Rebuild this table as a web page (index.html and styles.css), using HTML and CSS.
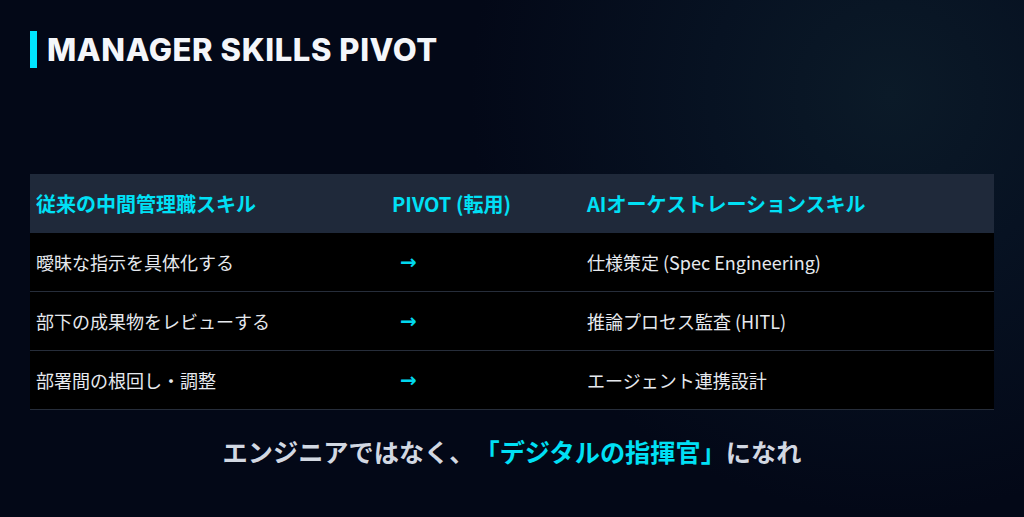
FILE: index.html
```html
<!DOCTYPE html>
<html lang="ja">
<head>
<meta charset="utf-8">
<link rel="stylesheet" href="styles.css">
</head>
<body>
<div class="slide">
  <h1 class="title">MANAGER SKILLS PIVOT</h1>
  <div class="table">
    <div class="row head">
      <div class="cell">従来の中間管理職スキル</div>
      <div class="cell">PIVOT (転用)</div>
      <div class="cell">AIオーケストレーションスキル</div>
    </div>
    <div class="row">
      <div class="cell">曖昧な指示を具体化する</div>
      <div class="cell arrow">→</div>
      <div class="cell">仕様策定 (Spec Engineering)</div>
    </div>
    <div class="row">
      <div class="cell">部下の成果物をレビューする</div>
      <div class="cell arrow">→</div>
      <div class="cell">推論プロセス監査 (HITL)</div>
    </div>
    <div class="row">
      <div class="cell">部署間の根回し・調整</div>
      <div class="cell arrow">→</div>
      <div class="cell">エージェント連携設計</div>
    </div>
  </div>
  <p class="tagline">エンジニアではなく、<span class="hl">「デジタルの指揮官」</span>になれ</p>
</div>
</body>
</html>
```
FILE: styles.css
```css
* { box-sizing: border-box; margin: 0; padding: 0; }
html, body { width: 1024px; height: 517px; overflow: hidden; }
body {
  background: #030817;
  font-family: "Noto Sans CJK JP", "Noto Sans", sans-serif;
  color: #e8ecf2;
  text-spacing-trim: space-all;
}
.slide {
  width: 1024px;
  height: 517px;
  padding: 31px 30px 0 30px;
  background: radial-gradient(circle at 890px 95px, #0b1a28 0px, #071222 180px, #030817 420px);
  display: flex;
  flex-direction: column;
}
.title {
  font-family: "Inter", "Lato", sans-serif;
  font-weight: 800;
  font-size: 31px;
  color: #f4f6fa;
  line-height: 37px;
  border-left: 7px solid #00e5ff;
  padding-left: 10px;
  letter-spacing: 0.6px;
}
.table {
  margin-top: 106px;
  width: 964px;
}
.row {
  display: grid;
  grid-template-columns: 356px 195px 413px;
  height: 59px;
  align-items: center;
  background: #000000;
  border-bottom: 1px solid #262d3a;
  font-size: 18px;
  color: #e6e9ee;
}
.row.head {
  background: #1f293a;
  border-bottom: none;
  height: 59px;
  font-weight: 700;
  font-size: 20px;
  color: #00e0f5;
}
.cell { padding-left: 6px; white-space: nowrap; }
.arrow {
  color: #00d8ee;
  font-weight: 700;
  padding-left: 14px;
  font-family: "DejaVu Sans", sans-serif;
  font-size: 20px;
}
.tagline {
  margin-top: 24px;
  text-align: center;
  font-weight: 700;
  font-size: 25.2px;
  color: #d2d8e2;
  line-height: 34px;
}
.hl { color: #00e0f5; }
```
